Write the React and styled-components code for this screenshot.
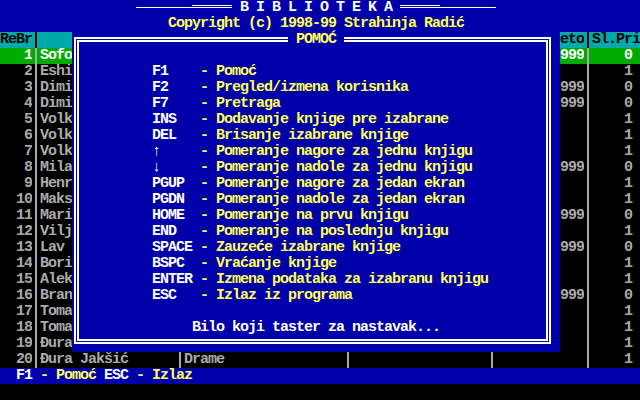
import React from 'react';
import styled, { createGlobalStyle } from 'styled-components';

const BLUE = '#0000AA';
const GREEN = '#00AA00';
const CYAN = '#00AAAA';
const GRAY = '#AAAAAA';
const WHITE = '#FFFFFF';
const YELLOW = '#FFFF55';
const BLACK = '#000000';

const Global = createGlobalStyle`
  html, body { margin: 0; padding: 0; background: #000; }
  body { width: 640px; height: 400px; overflow: hidden; }
`;

const Screen = styled.div`
  position: relative;
  width: 640px;
  height: 400px;
  display: flex;
  flex-direction: column;
  background: ${BLACK};
  font-family: "Liberation Mono", "DejaVu Sans Mono", monospace;
  font-size: 15px;
  font-weight: 700;
  letter-spacing: -1px;
  line-height: 16px;
  white-space: pre;
`;

const TopBar = styled.header`
  background: ${BLUE};
  display: flex;
  flex-direction: column;
`;

const TitleRow = styled.div`
  height: 16px;
  display: flex;
  padding-left: 136px;
  color: ${WHITE};
`;

const Rule = styled.span`
  width: ${p => p.$w}px;
  height: ${p => (p.$double ? 1 : 0)}px;
  margin-top: ${p => (p.$double ? 5 : 7)}px;
  border-top: 1px solid ${WHITE};
  border-bottom: ${p => (p.$double ? `1px solid ${WHITE}` : 'none')};
`;

const CopyrightRow = styled.div`
  height: 16px;
  padding-left: 168px;
  color: ${YELLOW};
`;

const Table = styled.main`
  display: flex;
  flex-direction: column;
`;

const COLS = '32px 8px 136px 8px 160px 8px 136px 8px 88px 8px 48px';

const Row = styled.div`
  display: grid;
  grid-template-columns: ${COLS};
  height: 16px;
  background: ${p => p.$bg};
  color: ${p => p.$fg};
`;

const Cell = styled.span`
  overflow: hidden;
  text-align: ${p => p.$align || 'left'};
  padding-right: ${p => p.$pr || 0}px;
`;

const Sep = styled.span`
  background: linear-gradient(
    to right,
    transparent 3px,
    ${p => p.$color} 3px,
    ${p => p.$color} 5px,
    transparent 5px
  );
`;

const StatusBar = styled.footer`
  height: 16px;
  background: ${BLUE};
  color: ${YELLOW};
  padding-left: 16px;
`;

const Key = styled.span`
  color: ${WHITE};
`;

const BottomLine = styled.div`
  height: 16px;
  background: ${BLACK};
`;

const Dialog = styled.section`
  position: absolute;
  left: 72px;
  top: 32px;
  width: 488px;
  height: 320px;
  background: ${BLUE};
  display: flex;
`;

const FrameOuter = styled.div`
  flex: 1;
  display: flex;
  margin: 5px 9px 8px 2px;
  border: 2px solid ${WHITE};
  padding: 1px;
`;

const FrameInner = styled.div`
  flex: 1;
  display: flex;
  flex-direction: column;
  border: 2px solid ${WHITE};
  padding: 22px 0 0 73px;
`;

const Legend = styled.span`
  position: absolute;
  top: 0;
  left: 50%;
  transform: translateX(-50%);
  height: 16px;
  padding: 0 8px;
  background: ${BLUE};
  color: ${YELLOW};
`;

const HelpList = styled.div`
  display: grid;
  grid-template-columns: 48px auto;
  grid-auto-rows: 16px;
`;

const HelpKey = styled.span`
  color: ${WHITE};
`;

const HelpDesc = styled.span`
  color: ${YELLOW};
`;

const Continue = styled.div`
  margin-top: 16px;
  padding-left: 40px;
  height: 16px;
  color: ${WHITE};
`;

const books = [
  { a: 'Sofokle', t: '', m: '999', p: '0' },
  { a: 'Eshil', t: '', m: '', p: '1' },
  { a: 'Dimitrije', t: '', m: '999', p: '0' },
  { a: 'Dimitrije', t: '', m: '999', p: '0' },
  { a: 'Volker', t: '', m: '', p: '1' },
  { a: 'Volker', t: '', m: '', p: '1' },
  { a: 'Volker', t: '', m: '', p: '1' },
  { a: 'Milan Rakić', t: '', m: '999', p: '0' },
  { a: 'Henrik Ibzen', t: '', m: '', p: '1' },
  { a: 'Maksim Gorki', t: '', m: '', p: '1' },
  { a: 'Marin Držić', t: '', m: '999', p: '0' },
  { a: 'Viljem', t: '', m: '', p: '1' },
  { a: 'Lav Tolstoj', t: '', m: '999', p: '0' },
  { a: 'Boris Vian', t: '', m: '', p: '1' },
  { a: 'Aleksa Šantić', t: '', m: '', p: '1' },
  { a: 'Branko Ćopić', t: '', m: '999', p: '0' },
  { a: 'Toma Akvinski', t: '', m: '', p: '1' },
  { a: 'Toma Mor', t: '', m: '', p: '1' },
  { a: 'Đura Jakšić', t: '', m: '', p: '1' },
  { a: 'Đura Jakšić', t: 'Drame', m: '', p: '1' },
];

const help = [
  ['F1', 'Pomoć'],
  ['F2', 'Pregled/izmena korisnika'],
  ['F7', 'Pretraga'],
  ['INS', 'Dodavanje knjige pre izabrane'],
  ['DEL', 'Brisanje izabrane knjige'],
  ['↑', 'Pomeranje nagore za jednu knjigu'],
  ['↓', 'Pomeranje nadole za jednu knjigu'],
  ['PGUP', 'Pomeranje nagore za jedan ekran'],
  ['PGDN', 'Pomeranje nadole za jedan ekran'],
  ['HOME', 'Pomeranje na prvu knjigu'],
  ['END', 'Pomeranje na poslednju knjigu'],
  ['SPACE', 'Zauzeće izabrane knjige'],
  ['BSPC', 'Vraćanje knjige'],
  ['ENTER', 'Izmena podataka za izabranu knjigu'],
  ['ESC', 'Izlaz iz programa'],
];

function TableRow({ cells, bg, fg, sep }) {
  const [n, a, t, x, m, p] = cells;
  return (
    <Row $bg={bg} $fg={fg}>
      <Cell $align="right">{n}</Cell>
      <Sep $color={sep} />
      <Cell>{a}</Cell>
      <Sep $color={sep} />
      <Cell>{t}</Cell>
      <Sep $color={sep} />
      <Cell>{x}</Cell>
      <Sep $color={sep} />
      <Cell $align="right">{m}</Cell>
      <Sep $color={sep} />
      <Cell $align="right" $pr={p.length > 1 ? 0 : 8}>{p}</Cell>
    </Row>
  );
}

export default function App() {
  return (
    <Screen>
      <Global />
      <TopBar>
        <TitleRow>
          <Rule $w={56} />
          <Rule $w={40} $double />
          <span> B I B L I O T E K A </span>
          <Rule $w={40} $double />
          <Rule $w={56} />
        </TitleRow>
        <CopyrightRow>Copyright (c) 1998-99 Strahinja Radić</CopyrightRow>
      </TopBar>

      <Table>
        <TableRow
          cells={['ReBr', '', '', '', 'Zauzeto', 'Sl.Pri']}
          bg={CYAN}
          fg={BLACK}
          sep={BLACK}
        />
        {books.map((b, i) => (
          <TableRow
            key={i}
            cells={[String(i + 1), b.a, b.t, '', b.m, b.p]}
            bg={i === 0 ? GREEN : BLACK}
            fg={i === 0 ? WHITE : GRAY}
            sep={GRAY}
          />
        ))}
      </Table>

      <StatusBar>
        <Key>F1</Key> - Pomoć <Key>ESC</Key> - Izlaz
      </StatusBar>
      <BottomLine />

      <Dialog>
        <Legend>POMOĆ</Legend>
        <FrameOuter>
          <FrameInner>
            <HelpList>
              {help.map(([k, d]) => (
                <React.Fragment key={k}>
                  <HelpKey>{k}</HelpKey>
                  <HelpDesc>- {d}</HelpDesc>
                </React.Fragment>
              ))}
            </HelpList>
            <Continue>Bilo koji taster za nastavak...</Continue>
          </FrameInner>
        </FrameOuter>
      </Dialog>
    </Screen>
  );
}
